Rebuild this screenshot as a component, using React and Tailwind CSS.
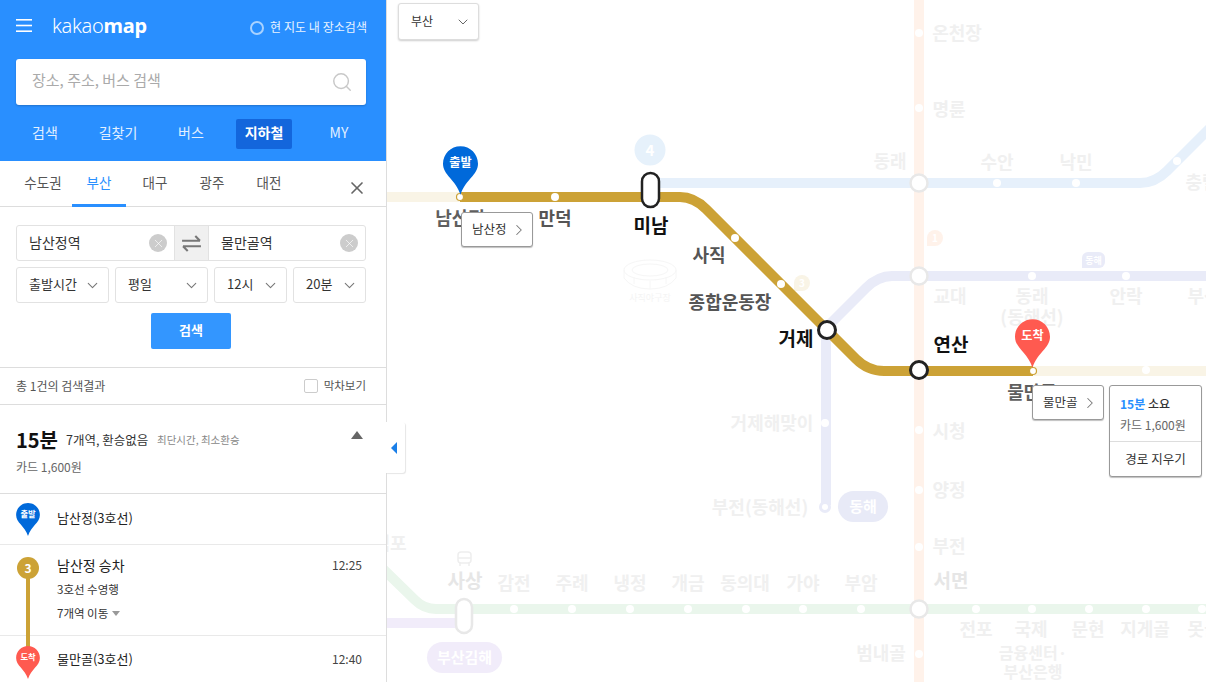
import { ChevronDown, ChevronRight, Search, X } from "lucide-react";

const navItems = [
  { label: "검색", cls: "left-[16px] w-[58px]" },
  { label: "길찾기", cls: "left-[89px] w-[58px]" },
  { label: "버스", cls: "left-[162px] w-[58px]" },
  { label: "MY", cls: "left-[310px] w-[58px]" },
];

// faded station names on the map
const fadedLabels = [
  ["온천장", 957, 33], ["명륜", 949, 109], ["동래", 890, 161], ["수안", 997, 162], ["낙민", 1076, 162],
  ["충렬", 1202, 182], ["교대", 950, 296], ["동래", 1032, 296], ["(동해선)", 1032, 317], ["안락", 1126, 296],
  ["부산", 1204, 296], ["시청", 949, 431], ["양정", 949, 490], ["부전", 949, 546], ["전포", 976, 629],
  ["국제", 1031, 629], ["문현", 1088, 629], ["지게골", 1145, 629], ["못골", 1204, 629], ["금융센터·", 1033, 652, 16],
  ["부산은행", 1033, 671, 16], ["범내골", 881, 653], ["거제해맞이", 772, 423], ["부전(동해선)", 760, 507],
  ["감전", 514, 583], ["주례", 572, 583], ["냉정", 630, 583], ["개금", 688, 583], ["동의대", 745, 583],
  ["가야", 803, 583], ["부암", 861, 583], ["덕포", 390, 543],
];

const activeLabels = [
  ["남산정", 460, 218, 18, "#5f5f5f"],
  ["만덕", 555, 218, 18, "#555"],
  ["미남", 651, 226, 19, "#111"],
  ["사직", 709, 255, 18, "#555"],
  ["종합운동장", 730, 302, 18, "#555"],
  ["거제", 796, 339, 19, "#111"],
  ["연산", 951, 345, 19, "#111"],
  ["물만골", 1032, 392, 18, "#5f5f5f"],
];

const paleDots = [
  [919, 33], [919, 108], [997, 183], [1076, 183], [1177, 161], [1032, 276], [1126, 276], [825, 423], [919, 430],
  [919, 490], [919, 547], [919, 654], [514, 609], [572, 609], [630, 609], [688, 609], [746, 609], [803, 609],
  [861, 609], [976, 609], [1032, 609], [1089, 609], [1146, 609], [1202, 609], [1146, 370],
];

function Pin({ color, label, className }) {
  return (
    <svg viewBox="0 0 36 50" className={className}>
      <path d="M18 0C8 0 0 8 0 18C0 30 13 34 18 50C23 34 36 30 36 18C36 8 28 0 18 0Z" fill={color} />
      <text x="18" y="21.5" textAnchor="middle" fontSize="12.5" fontWeight="700" fill="#fff">{label}</text>
    </svg>
  );
}

function FieldSelect({ label, className }) {
  return (
    <div className={`h-[36px] flex items-center justify-between pl-[12px] pr-[7px] border border-[#e2e2e2] rounded-[3px] text-[13px] text-[#333] ${className}`}>
      <span className="-mt-[2px]">{label}</span>
      <ChevronDown size={17} strokeWidth={1.5} className="text-[#777]" />
    </div>
  );
}

function Callout({ label, className }) {
  return (
    <div className={`absolute h-[35px] w-[72px] flex items-center justify-between pl-[10px] pr-[4px] bg-white border border-[#999] rounded-[3px] shadow-[0_1px_1px_rgba(0,0,0,0.25)] text-[12.5px] text-[#333] ${className}`}>
      <span>{label}</span>
      <ChevronRight size={18} strokeWidth={1.4} className="text-[#777]" />
    </div>
  );
}

function SubwayMap() {
  return (
    <svg viewBox="387 0 819 682" className="w-[819px] h-[682px]">
      <g fill="none" strokeWidth="10">
        <path d="M919 0V682" stroke="#fff2ea" />
        <path d="M650 183H1140Q1155 183 1167 171L1216 122" stroke="#e6f0fb" />
        <path d="M1206 276H892Q878 276 866 288L826 328V505" stroke="#e9ebf8" />
        <path d="M380 566L415 600Q424 609 436 609H1206" stroke="#eaf6ec" />
        <path d="M387 623H460" stroke="#f1ecfa" />
        <path d="M387 197H460M1033 371H1206" stroke="#f9f4e6" />
      </g>
      <circle cx="825" cy="507" r="4.5" fill="#fff" stroke="#e9ebf8" strokeWidth="3" />
      {paleDots.map(([x, y]) => (
        <circle key={`${x}-${y}`} cx={x} cy={y} r="4" fill="#fff" />
      ))}
      {[183, 276, 609].map((y) => (
        <circle key={y} cx="919" cy={y} r="8.5" fill="#fff" stroke="#e8e8e8" strokeWidth="2.5" />
      ))}
      <rect x="456" y="599" width="16" height="34" rx="8" fill="#fff" stroke="#e8e8e8" strokeWidth="2.5" />

      {/* badges */}
      <circle cx="650" cy="150" r="15.5" fill="#e6f1fb" />
      <text x="650" y="155.5" textAnchor="middle" fontSize="15" fontWeight="700" fill="#fff">4</text>
      <path d="M927 246V238a8 8 0 1 1 8 8Z" fill="#fff2ea" />
      <text x="935" y="242" textAnchor="middle" fontSize="10" fontWeight="700" fill="#fff">1</text>
      <path d="M794 291V283a8 8 0 1 1 8 8Z" fill="#f9f4e6" />
      <text x="802" y="287" textAnchor="middle" fontSize="10" fontWeight="700" fill="#fff">3</text>
      <path d="M1082 268V258a6 6 0 0 1 6-6H1099a6 6 0 0 1 6 6V262a6 6 0 0 1-6 6Z" fill="#e9ebf8" />
      <text x="1093.5" y="264" textAnchor="middle" fontSize="9" fontWeight="700" fill="#fff">동해</text>
      <rect x="838" y="491" width="50" height="31" rx="15.5" fill="#e8eaf7" />
      <text x="863" y="512" textAnchor="middle" fontSize="15" fontWeight="700" fill="#fff">동해</text>
      <rect x="427" y="642" width="75" height="31" rx="15.5" fill="#f1ecfa" />
      <text x="464.5" y="663" textAnchor="middle" fontSize="15" fontWeight="700" fill="#fff">부산김해</text>

      {/* stadium */}
      <g fill="none" stroke="#f6f6f6" strokeWidth="1">
        <ellipse cx="650" cy="270" rx="26" ry="10" />
        <ellipse cx="650" cy="270" rx="18" ry="6" />
        <path d="M624 270V278Q632 289 650 289Q668 289 676 278V270M634 284V277M650 289V281M666 284V277" />
      </g>
      <text x="650" y="301" textAnchor="middle" fontSize="9" fill="#f4f4f4">사직야구장</text>

      {/* bus */}
      <g fill="none" stroke="#eee" strokeWidth="1.5">
        <rect x="458" y="552" width="13" height="11" rx="3" />
        <path d="M458 558H471M460 563V566M469 563V566" />
      </g>

      <g fontSize="18" fontWeight="700" fill="#f0f0f0" textAnchor="middle">
        {fadedLabels.map(([t, x, y, size]) => (
          <text key={`${t}-${x}`} x={x} y={y + 6.5} fontSize={size || 18}>{t}</text>
        ))}
        <text x="465" y="588" fontSize="19" fill="#e6e6e6">사상</text>
        <text x="951" y="588" fontSize="19" fill="#e6e6e6">서면</text>
      </g>

      {/* route */}
      <path d="M460 197H680Q694 197 706 209L856 359Q868 371 884 371H1033" fill="none" stroke="#cca236" strokeWidth="10" />
      <rect x="642" y="173" width="17" height="34" rx="8.5" fill="#fff" stroke="#222" strokeWidth="2.5" />
      <circle cx="827" cy="330" r="8.5" fill="#fff" stroke="#222" strokeWidth="3" />
      <circle cx="919" cy="370" r="8.5" fill="#fff" stroke="#222" strokeWidth="3" />
      {[[555, 197], [735, 238], [781, 284]].map(([x, y]) => (
        <circle key={x} cx={x} cy={y} r="4" fill="#fff" />
      ))}
      <circle cx="460" cy="197" r="3.5" fill="#fff" stroke="#cca236" strokeWidth="1.2" />
      <circle cx="1033" cy="371" r="3.5" fill="#fff" stroke="#cca236" strokeWidth="1.2" />
      <g fontWeight="700" textAnchor="middle">
        {activeLabels.map(([t, x, y, size, fill]) => (
          <text key={t} x={x} y={y + 6.5} fontSize={size} fill={fill}>{t}</text>
        ))}
      </g>
    </svg>
  );
}

export default function App() {
  return (
    <div className="w-[1206px] h-[682px] flex overflow-hidden bg-white [font-family:'Noto_Sans_CJK_KR','Noto_Sans',sans-serif]">

      {/* SIDEBAR */}
      <div className="w-[387px] h-[682px] shrink-0 overflow-hidden border-r border-[#ddd] z-10">

        <div className="h-[161px] bg-[#298fff] text-white relative">
          <div className="h-[59px] flex items-start">
            <svg viewBox="0 0 16 13" className="w-[16px] h-[13px] ml-[16px] mt-[19px]" fill="#fff">
              <rect width="16" height="1.6" />
              <rect y="5.7" width="16" height="1.6" />
              <rect y="11.4" width="16" height="1.6" />
            </svg>
            <div className="ml-[20px] mt-[10px] h-[32px] leading-[32px] text-[20px] tracking-[-0.3px] [font-family:'Noto_Sans','Open_Sans',sans-serif]">
              <span className="font-light">kakao</span><span className="font-bold">map</span>
            </div>
            <span className="ml-auto mt-[21px] w-[14px] h-[14px] rounded-full border-[2px] border-[#a9d2ff]" />
            <span className="ml-[6px] mr-[19px] mt-[17px] text-[12px] leading-[20px] tracking-[0.05px] text-[#e8f3ff]">현 지도 내 장소검색</span>
          </div>

          <div className="mx-[16px] w-[350px] h-[46px] bg-white rounded-[3px] shadow-[0_1px_2px_rgba(0,0,0,0.2)] flex items-center justify-between pl-[16px] pr-[13px]">
            <span className="text-[15px] text-[#aaa] -mt-[3px]">장소, 주소, 버스 검색</span>
            <Search size={22} strokeWidth={1.6} className="text-[#c8c8c8]" />
          </div>

          <div className="absolute left-0 right-0 top-[119px] h-[30px] text-[14px] leading-[27px] text-[#e3f0ff]">
            {navItems.map((n) => (
              <span key={n.label} className={`absolute top-0 text-center ${n.cls}`}>{n.label}</span>
            ))}
            <span className="absolute left-[236px] top-0 w-[56px] h-[30px] bg-[#1366dc] rounded-[2px] text-center font-bold text-white">지하철</span>
          </div>
        </div>

        {/* REGION TABS */}
        <div className="h-[46px] flex border-b border-[#ddd] text-[13.5px] text-[#555] relative">
          <span className="w-[56px] ml-[15px] text-center leading-[43px]">수도권</span>
          <span className="w-[54px] ml-[1px] text-center leading-[43px] text-[#298fff] border-b-[3px] border-[#298fff] h-[46px]">부산</span>
          <span className="w-[56px] ml-[1px] text-center leading-[43px]">대구</span>
          <span className="w-[56px] ml-[1px] text-center leading-[43px]">광주</span>
          <span className="w-[56px] ml-[1px] text-center leading-[43px]">대전</span>
          <X size={20} strokeWidth={2} className="text-[#666] ml-auto mr-[19px] mt-[17px]" />
        </div>

        {/* ROUTE FORM */}
        <div className="h-[161px] pt-[18px] px-[16px] border-b border-[#ddd]">
          <div className="w-[350px] h-[36px] flex border border-[#e2e2e2] rounded-[3px] text-[14px] text-[#333]">
            <div className="w-[157px] flex items-center justify-between pl-[12px] pr-[7px]">
              <span className="-mt-[2px]">남산정역</span>
              <span className="w-[18px] h-[18px] rounded-full bg-[#ccc] flex items-center justify-center">
                <X size={13} strokeWidth={1.2} className="text-white" />
              </span>
            </div>
            <div className="w-[35px] bg-[#f0f0f0] border-x border-[#e2e2e2] flex items-center justify-center">
              <svg viewBox="0 0 22 18" className="w-[21px] h-[17px]" fill="none" stroke="#777" strokeWidth="2.2">
                <path d="M1 6H20M15 1L20 6M21 12H2M7 17L2 12" />
              </svg>
            </div>
            <div className="flex-1 flex items-center justify-between pl-[12px] pr-[7px]">
              <span className="-mt-[2px]">물만골역</span>
              <span className="w-[18px] h-[18px] rounded-full bg-[#ccc] flex items-center justify-center">
                <X size={13} strokeWidth={1.2} className="text-white" />
              </span>
            </div>
          </div>

          <div className="flex gap-[6px] mt-[6px]">
            <FieldSelect label="출발시간" className="w-[93px]" />
            <FieldSelect label="평일" className="w-[93px]" />
            <FieldSelect label="12시" className="w-[73px]" />
            <FieldSelect label="20분" className="w-[73px]" />
          </div>

          <div className="mt-[10px] ml-[135px] w-[80px] h-[36px] bg-[#3396ff] rounded-[2px] text-white text-[13px] font-bold leading-[33px] text-center">검색</div>
        </div>

        {/* RESULT COUNT */}
        <div className="h-[37px] pl-[16px] pr-[20px] flex items-center justify-between border-b border-[#ddd] text-[12px] text-[#555]">
          <span className="-mt-[1px]">총 1건의 검색결과</span>
          <span className="flex items-center gap-[6px] text-[11.5px]">
            <span className="w-[14px] h-[14px] border border-[#ccc] rounded-[2px]" />
            막차보기
          </span>
        </div>

        {/* SUMMARY */}
        <div className="h-[89px] px-[16px] border-b border-[#ddd] relative">
          <div className="pt-[20px] h-[50px] flex items-center">
            <span className="text-[20px] font-bold text-[#111] w-[50px]">15분</span>
            <span className="text-[12.5px] text-[#333] w-[91px]">7개역, 환승없음</span>
            <span className="text-[10.5px] text-[#888]">최단시간, 최소환승</span>
          </div>
          <div className="mt-[3px] text-[12px] leading-[18px] text-[#666]">카드 1,600원</div>
          <svg viewBox="0 0 12 8" className="absolute right-[23px] top-[26px] w-[12px] h-[8px]" fill="#666">
            <path d="M6 0L12 8H0Z" />
          </svg>
        </div>

        {/* ROUTE STEPS */}
        <div className="h-[51px] pl-[16px] flex items-center border-b border-[#e9e9e9]">
          <Pin color="#0069da" label="출발" className="w-[24px] h-[33px]" />
          <span className="ml-[17px] -mt-[3px] text-[13px] text-[#222]">남산정(3호선)</span>
        </div>

        <div className="h-[91px] pl-[16px] pr-[24px] flex border-b border-[#e9e9e9] relative">
          <span className="w-[22px] h-[22px] ml-[1px] mt-[12px] rounded-full bg-[#cca236] text-white text-[12px] font-bold leading-[22px] text-center">3</span>
          <div className="ml-[18px] flex-1">
            <div className="mt-[7px] flex justify-between items-center h-[26px]">
              <span className="text-[14px] text-[#222]">남산정 승차</span>
              <span className="text-[12px] text-[#444]">12:25</span>
            </div>
            <div className="mt-[2px] text-[11.5px] leading-[18px] text-[#333]">3호선 수영행</div>
            <div className="mt-[6px] text-[11.5px] leading-[18px] text-[#333] flex items-center gap-[4px]">
              7개역 이동
              <svg viewBox="0 0 8 5" className="w-[8px] h-[5px]" fill="#999"><path d="M0 0H8L4 5Z" /></svg>
            </div>
          </div>
          <span className="absolute left-[26px] top-[33px] w-[4px] h-[70px] bg-[#cca236]" />
        </div>

        <div className="h-[46px] pl-[16px] pr-[24px] flex items-start relative">
          <Pin color="#ff5a50" label="도착" className="w-[24px] h-[33px] mt-[10px] relative" />
          <span className="ml-[17px] mt-[12px] text-[13px] leading-[22px] text-[#222]">물만골(3호선)</span>
          <span className="ml-auto mt-[12px] text-[12px] leading-[22px] text-[#444]">12:40</span>
        </div>
      </div>

      {/* MAP */}
      <div className="relative w-[819px] h-[682px] shrink-0">
        <SubwayMap />

        <div className="absolute left-[11px] top-[3px] w-[81px] h-[37px] bg-white border border-[#ddd] rounded-[3px] shadow-[0_1px_2px_rgba(0,0,0,0.2)] flex items-center justify-between pl-[12px] pr-[7px] text-[12px] text-[#333]">
          <span className="-mt-[2px]">부산</span>
          <ChevronDown size={16} strokeWidth={1.5} className="text-[#666]" />
        </div>

        <Pin color="#0069da" label="출발" className="absolute left-[56px] top-[146px] w-[35px] h-[49px]" />
        <Pin color="#ff5a50" label="도착" className="absolute left-[628px] top-[319px] w-[35px] h-[49px]" />

        <Callout label="남산정" className="left-[74px] top-[212px]" />
        <Callout label="물만골" className="left-[645px] top-[385px]" />

        <div className="absolute left-[722px] top-[385px] w-[93px] h-[92px] bg-white border border-[#999] rounded-[3px] shadow-[0_1px_1px_rgba(0,0,0,0.25)] text-[#333]">
          <div className="h-[56px] pl-[10px] pt-[8px] border-b border-[#ddd]">
            <div className="text-[12px] leading-[20px] font-medium"><span className="text-[#298fff] font-bold">15분</span> 소요</div>
            <div className="text-[12px] leading-[20px] text-[#666] mt-[1px]">카드 1,600원</div>
          </div>
          <div className="h-[35px] leading-[34px] text-center text-[12.5px]">경로 지우기</div>
        </div>

        <div className="absolute -left-[1px] top-[422px] w-[19px] h-[51px] bg-white rounded-r-[3px] shadow-[1px_1px_1px_rgba(0,0,0,0.1)] flex items-center pl-[5px] z-20">
          <svg viewBox="0 0 6 12" className="w-[6px] h-[12px]" fill="#1a7fe8"><path d="M6 0V12L0 6Z" /></svg>
        </div>
      </div>
    </div>
  );
}
